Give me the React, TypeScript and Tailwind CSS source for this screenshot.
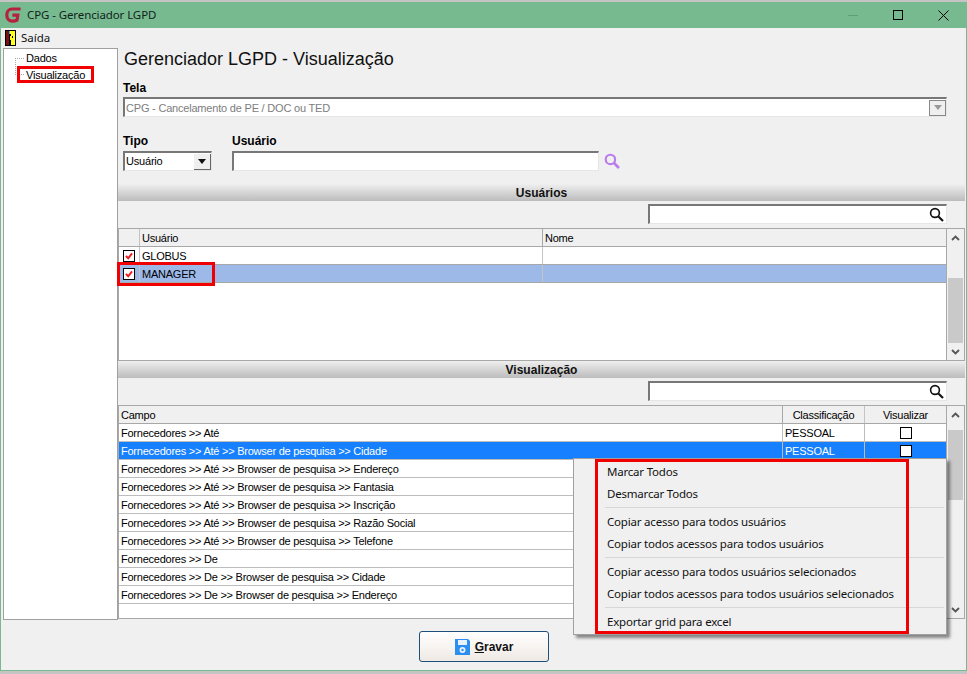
import React from "react";

const ui = { fontFamily: '"Liberation Sans", Arial, sans-serif' };
const menuFont = { fontFamily: '"Noto Sans", "Open Sans", sans-serif' };

function Logo() {
  return (
    <svg width="16" height="16" viewBox="0 0 16 16" fill="none">
      <path d="M15.6 2 H7.2 C3.8 2 1.8 4.8 1.8 8 C1.8 11.6 4 14.2 7.4 14.2 C9.4 14.2 11 13.8 12 13.2 L12.8 8.2 H7.4" stroke="#b5213f" strokeWidth="3.2" />
    </svg>
  );
}

function Door() {
  return (
    <svg width="11" height="16" viewBox="0 0 11 16">
      <rect x="0" y="0" width="11" height="16" fill="#000" />
      <rect x="1" y="1" width="3" height="14" fill="#7a1010" />
      <rect x="5" y="1" width="5" height="14" fill="#ffff20" />
      <rect x="4" y="1" width="1" height="3" fill="#20c0d8" />
      <rect x="4" y="4" width="2" height="2" fill="#000" />
      <rect x="5" y="10" width="1" height="5" fill="#000" />
      <rect x="7" y="6" width="1" height="2" fill="#000" />
    </svg>
  );
}

function Magnifier({ color = "#111", size = 15, sw = 1.6 }: { color?: string; size?: number; sw?: number }) {
  return (
    <svg width={size} height={size} viewBox="0 0 15 15" fill="none">
      <circle cx="6" cy="6" r="4.4" stroke={color} strokeWidth={sw} />
      <path d="M9.4 9.4 L14 14" stroke={color} strokeWidth={sw + 0.5} />
    </svg>
  );
}

function Arrow({ dir, color = "#555" }: { dir: "up" | "down"; color?: string }) {
  return (
    <svg width="9" height="6" viewBox="0 0 9 6" fill="none">
      <path d={dir === "up" ? "M1 5 L4.5 1.5 L8 5" : "M1 1 L4.5 4.5 L8 1"} stroke={color} strokeWidth="1.8" />
    </svg>
  );
}

function CheckRed() {
  return (
    <span className="flex h-[12px] w-[12px] items-center justify-center border border-black bg-white">
      <svg width="8" height="8" viewBox="0 0 10 10" fill="none">
        <path d="M1.2 4.8 L4 7.8 L8.8 1.8" stroke="#f01818" strokeWidth="2.4" />
      </svg>
    </span>
  );
}

function SectionBar({ label }: { label: string }) {
  return (
    <div className="flex h-[17px] items-center justify-center bg-gradient-to-b from-[#efefef] to-[#bcbcbc] text-[12px] font-bold text-[#111]">
      {label}
    </div>
  );
}

function SearchBox() {
  return (
    <div className="flex justify-end pr-[18px]">
      <div className="flex h-[20px] w-[299px] items-center justify-end border-t-2 border-l-2 border-t-[#777] border-l-[#777] border-r border-b border-r-[#e6e6e6] border-b-[#e6e6e6] bg-white pr-[2px]">
        <Magnifier />
      </div>
    </div>
  );
}

function Scrollbar({ thumbTop, thumbH }: { thumbTop: number; thumbH: number }) {
  return (
    <div className="flex w-[18px] flex-col items-center border-l border-[#a8a8a8] bg-[#f0f0f0]">
      <div className="flex h-[17px] w-full items-center justify-center">
        <Arrow dir="up" />
      </div>
      <div className="flex min-h-0 w-full flex-1 flex-col pl-px pr-[1px]">
        <div style={{ height: thumbTop }} />
        <div className="bg-[#c9c9c9]" style={{ height: thumbH }} />
      </div>
      <div className="flex h-[17px] w-full items-center justify-center">
        <Arrow dir="down" />
      </div>
    </div>
  );
}

const campo = [
  "Fornecedores >> Até",
  "Fornecedores >> Até >> Browser de pesquisa >> Cidade",
  "Fornecedores >> Até >> Browser de pesquisa >> Endereço",
  "Fornecedores >> Até >> Browser de pesquisa >> Fantasia",
  "Fornecedores >> Até >> Browser de pesquisa >> Inscrição",
  "Fornecedores >> Até >> Browser de pesquisa >> Razão Social",
  "Fornecedores >> Até >> Browser de pesquisa >> Telefone",
  "Fornecedores >> De",
  "Fornecedores >> De >> Browser de pesquisa >> Cidade",
  "Fornecedores >> De >> Browser de pesquisa >> Endereço",
];

function MenuItem({ label }: { label: string }) {
  return <div className="flex h-[22px] items-center pl-[33px]">{label}</div>;
}
function MenuSep() {
  return <div className="mb-[3px] ml-[31px] mr-[2px] mt-[2px] h-px bg-[#d7d7d7]" />;
}

export default function App() {
  return (
    <div className="h-[674px] w-[967px] overflow-hidden bg-[#c4c4c4] text-black" style={ui}>
      <div className="relative mt-[2px] flex h-[669px] flex-col border-x border-b border-[#78ba90] bg-[#f0f0f0]">
        <div className="flex h-[26px] items-center bg-[#78ba90] pl-[4px]">
          <Logo />
          <span className="ml-[6px] text-[11.5px] tracking-[-0.1px] text-[#10241a]" style={menuFont}>CPG - Gerenciador LGPD</span>
          <div className="ml-auto flex items-center pr-[17px]">
            <div className="h-px w-[10px] bg-[#5f9e78]" />
            <div className="ml-[35px] h-[10px] w-[10px] border border-black" />
            <svg className="ml-[35px]" width="11" height="11" viewBox="0 0 11 11">
              <path d="M0.5 0.5 L10.5 10.5 M10.5 0.5 L0.5 10.5" stroke="#000" strokeWidth="1" />
            </svg>
          </div>
        </div>

        <div className="flex h-[20px] items-center pl-[4px] text-[11.5px] text-[#111]" style={menuFont}>
          <Door />
          <span className="ml-[5px]">Saída</span>
        </div>

        <div className="flex flex-1">
          <aside className="ml-[2px] h-[572px] w-[115px] border border-[#a0a0a0] bg-white text-[11px] tracking-[-0.2px]">
            <div className="relative pl-[22px] pt-px">
              <div className="absolute left-[11px] top-[9px] h-[17px] border-l border-dotted border-[#aaa]" />
              <div className="absolute left-[11px] top-[9px] w-[9px] border-t border-dotted border-[#aaa]" />
              <div className="absolute left-[11px] top-[25px] w-[9px] border-t border-dotted border-[#aaa]" />
              <div className="h-[17px] leading-[17px]">Dados</div>
              <div className="h-[17px] leading-[17px]">Visualização</div>
            </div>
          </aside>

          <main className="mr-px flex min-w-0 flex-1 flex-col">
            <h1 className="ml-[6px] mt-[2px] h-[19px] text-[18px] font-normal leading-[19px] text-[#111]">
              Gerenciador LGPD - Visualização
            </h1>

            <label className="ml-[5px] mt-[12px] text-[12px] font-bold leading-[14px]">Tela</label>
            <div className="ml-[5px] mt-[2px] flex h-[20px] w-[824px] items-center border-t-2 border-l-2 border-t-[#777] border-l-[#777] border-r border-b border-r-[#e6e6e6] border-b-[#e6e6e6] bg-white pl-[1px] text-[11px] tracking-[-0.2px] text-[#7d7d7d]">
              <span className="pt-[2px]">CPG - Cancelamento de PE / DOC ou TED</span>
              <div className="ml-auto flex h-[16px] w-[17px] items-center justify-center border border-[#888] bg-[#efefef]">
                <svg width="8" height="5" viewBox="0 0 8 5"><path d="M0 0 H8 L4 5 Z" fill="#999" /></svg>
              </div>
            </div>

            <div className="ml-[5px] mt-[17px] flex items-start">
              <div className="w-[109px]">
                <div className="text-[12px] font-bold leading-[14px]">Tipo</div>
                <div className="mt-[3px] flex h-[20px] w-[89px] items-center border-t-2 border-l-2 border-t-[#777] border-l-[#777] border-r border-b border-r-[#e6e6e6] border-b-[#e6e6e6] bg-white pl-[1px] text-[11px] tracking-[-0.2px]">
                  <span className="pb-[1px]">Usuário</span>
                  <div className="ml-auto flex h-[16px] w-[17px] items-center justify-center border-r border-b border-[#666] bg-[#efefef]">
                    <svg width="8" height="5" viewBox="0 0 8 5"><path d="M0 0 H8 L4 5 Z" fill="#111" /></svg>
                  </div>
                </div>
              </div>
              <div>
                <div className="text-[12px] font-bold leading-[14px]">Usuário</div>
                <div className="mt-[3px] flex items-center">
                  <div className="h-[20px] w-[367px] border-t-2 border-l-2 border-t-[#777] border-l-[#777] border-r border-b border-r-[#e6e6e6] border-b-[#e6e6e6] bg-white" />
                  <div className="ml-[5px] flex">
                    <Magnifier color="#b97cec" size={16} sw={2} />
                  </div>
                </div>
              </div>
            </div>

            <div className="mt-[13px]"><SectionBar label="Usuários" /></div>
            <div className="mt-[3px]"><SearchBox /></div>

            <div className="mt-[4px] flex h-[133px] border border-[#a8a8a8] bg-white text-[11px] tracking-[-0.24px]">
              <div className="min-w-0 flex-1">
                <div className="flex h-[18px] border-b border-[#a8a8a8] bg-[#f0f0f0] leading-[18px]">
                  <div className="w-[21px] border-r border-[#c4c4c4]" />
                  <div className="w-[403px] border-r border-[#a8a8a8] pl-[2px]">Usuário</div>
                  <div className="pl-[2px]">Nome</div>
                </div>
                {["GLOBUS", "MANAGER"].map((name, i) => (
                  <div key={name} className={`flex h-[18px] border-b border-[#a8a8a8] leading-[18px] ${i === 1 ? "bg-[#9db9e8]" : ""}`}>
                    <div className="flex w-[21px] items-center justify-center border-r border-[#c4c4c4]"><CheckRed /></div>
                    <div className="w-[403px] border-r border-[#c4c4c4] pl-[2px]">{name}</div>
                  </div>
                ))}
              </div>
              <Scrollbar thumbTop={32} thumbH={65} />
            </div>

            <SectionBar label="Visualização" />
            <div className="mt-[3px]"><SearchBox /></div>

            <div className="mt-[4px] flex h-[214px] border border-[#a8a8a8] bg-white text-[11px] tracking-[-0.24px]">
              <div className="min-w-0 flex-1">
                <div className="flex h-[18px] border-b border-[#a8a8a8] bg-[#f0f0f0] leading-[18px]">
                  <div className="w-[664px] border-r border-[#a8a8a8] pl-[2px]">Campo</div>
                  <div className="w-[82px] border-r border-[#c4c4c4] text-center">Classificação</div>
                  <div className="flex-1 text-center">Visualizar</div>
                </div>
                {campo.map((c, i) => {
                  const sel = i === 1;
                  return (
                    <div key={c} className={`flex h-[18px] border-b border-[#bdbdbd] leading-[18px] ${sel ? "bg-[#1680ff] text-white" : ""}`}>
                      <div className="w-[664px] border-r border-[#bdbdbd] pl-[2px]">{c}</div>
                      <div className="w-[82px] border-r border-[#bdbdbd] pl-[2px]">{i < 2 ? "PESSOAL" : ""}</div>
                      <div className="flex flex-1 items-center justify-center">
                        {i < 2 ? <span className="h-[12px] w-[12px] border border-black bg-white" /> : null}
                      </div>
                    </div>
                  );
                })}
              </div>
              <Scrollbar thumbTop={7} thumbH={70} />
            </div>

            <div className="ml-[301px] mt-[12px] flex">
              <button className="flex h-[31px] w-[130px] items-center justify-center rounded-[3px] border border-[#1d4f7a] bg-gradient-to-b from-white to-[#efe9e4] text-[12px] font-bold text-[#111]">
                <svg width="15" height="16" viewBox="0 0 15 16" className="mr-[5px]">
                  <path d="M0 0 H13 L15 2 V16 H0 Z" fill="#2a8ff0" />
                  <rect x="3" y="1" width="9" height="5" fill="#e8f2fb" />
                  <circle cx="7.5" cy="11" r="3" fill="#e8f2fb" />
                  <circle cx="7.5" cy="11" r="1.2" fill="#2a8ff0" />
                </svg>
                <span><span className="underline">G</span>ravar</span>
              </button>
            </div>
          </main>
        </div>

        {/* Context menu */}
        <div className="absolute left-[572px] top-[456px] h-[177px] w-[374px] border border-[#a0a0a0] bg-[#f0f0f0] pt-[2px] text-[11.5px] tracking-[-0.2px] text-[#111] shadow-[3px_3px_3px_rgba(0,0,0,0.45)]" style={menuFont}>
          <MenuItem label="Marcar Todos" />
          <MenuItem label="Desmarcar Todos" />
          <MenuSep />
          <MenuItem label="Copiar acesso para todos usuários" />
          <MenuItem label="Copiar todos acessos para todos usuários" />
          <MenuSep />
          <MenuItem label="Copiar acesso para todos usuários selecionados" />
          <MenuItem label="Copiar todos acessos para todos usuários selecionados" />
          <MenuSep />
          <MenuItem label="Exportar grid para excel" />
        </div>

        {/* Red highlights */}
        <div className="absolute left-[16px] top-[64px] h-[17px] w-[77px] border-[3px] border-[#f00000]" />
        <div className="absolute left-[116px] top-[260px] h-[24px] w-[98px] border-[3px] border-[#f00000]" />
        <div className="absolute left-[594px] top-[457px] h-[175px] w-[314px] border-[3px] border-[#f00000]" />
      </div>
    </div>
  );
}
